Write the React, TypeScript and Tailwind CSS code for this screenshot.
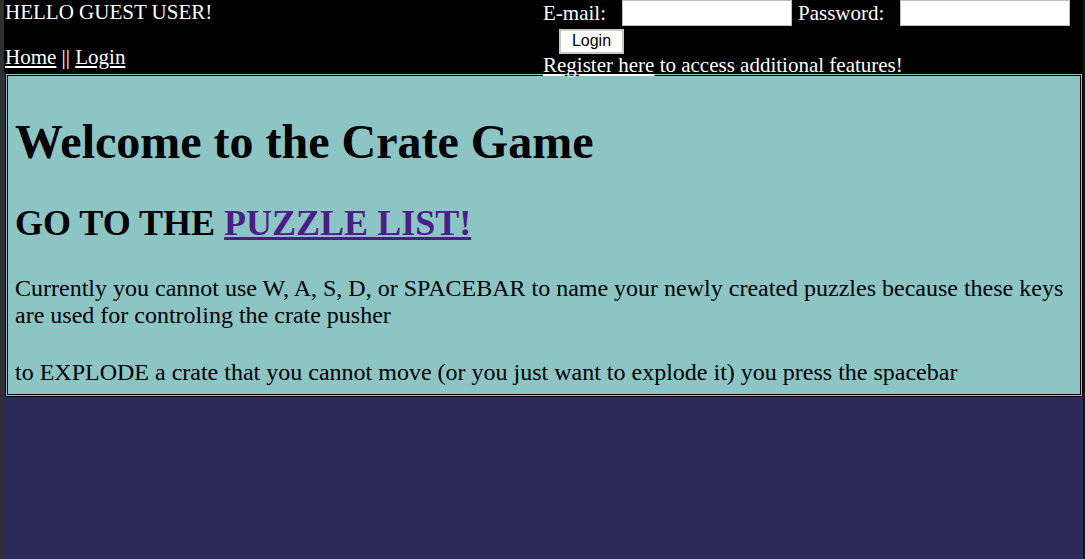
import React from 'react';

const serif = { fontFamily: '"Liberation Serif", "Times New Roman", serif' };

export default function App() {
  return (
    <div className="flex min-h-[559px] w-[1085px] bg-[#2d2b59]" style={serif}>
      {/* window edge behind the browser */}
      <div className="w-[4px] shrink-0 bg-[#2f3030]" />

      <div className="flex flex-1 flex-col">
        {/* Header bar */}
        <header className="relative z-10 flex h-[73px] bg-black text-white">
          <div className="w-[539px] shrink-0 pl-[1px] text-[21px] leading-[24px]">
            <div>HELLO GUEST USER!</div>
            <div className="mt-[21px]">
              <a href="#" className="underline">Home</a> || <a href="#" className="underline">Login</a>
            </div>
          </div>

          <form className="flex flex-col text-[21px] leading-[24px]" onSubmit={(e) => e.preventDefault()}>
            <div className="flex h-[26px] items-center">
              <label>E-mail:</label>
              <input
                type="text"
                className="ml-[16px] h-[26px] w-[170px] border border-[#bdbdbd] bg-white"
              />
              <label className="ml-[6px]">Password:</label>
              <input
                type="password"
                className="ml-[16px] h-[26px] w-[170px] border border-[#bdbdbd] bg-white"
              />
            </div>
            <div className="mt-[1px] pl-[16px]">
              <button
                type="submit"
                className="h-[25px] w-[65px] border-2 border-[#c8c8c8] bg-white text-[16px] leading-none text-black"
                style={{ fontFamily: '"Liberation Sans", Arial, sans-serif' }}
              >
                Login
              </button>
            </div>
            <div className="-mt-[1px] whitespace-nowrap">
              <a href="#" className="underline">Register here</a> to access additional features!
            </div>
          </form>
        </header>

        {/* Content box */}
        <main className="ml-[1px] border-[3px] border-double border-black bg-[#8cc5c4] px-[7px] pb-[8px] text-black">
          <h1 className="mt-[38px] text-[48px] font-bold leading-[55px]">Welcome to the Crate Game</h1>
          <h2 className="mt-[34px] text-[36px] font-bold leading-[41px]">
            GO TO THE <a href="#" className="text-[#4b1d87] underline">PUZZLE LIST!</a>
          </h2>
          <p className="mt-[31px] text-[24px] leading-[27px]">
            Currently you cannot use W, A, S, D, or SPACEBAR to name your newly created puzzles because these keys
            are used for controling the crate pusher
          </p>
          <p className="mt-[30px] text-[24px] leading-[27px]">
            to EXPLODE a crate that you cannot move (or you just want to explode it) you press the spacebar
          </p>
        </main>
      </div>

      <div className="w-[2px] shrink-0 bg-[#151515]" />
    </div>
  );
}
